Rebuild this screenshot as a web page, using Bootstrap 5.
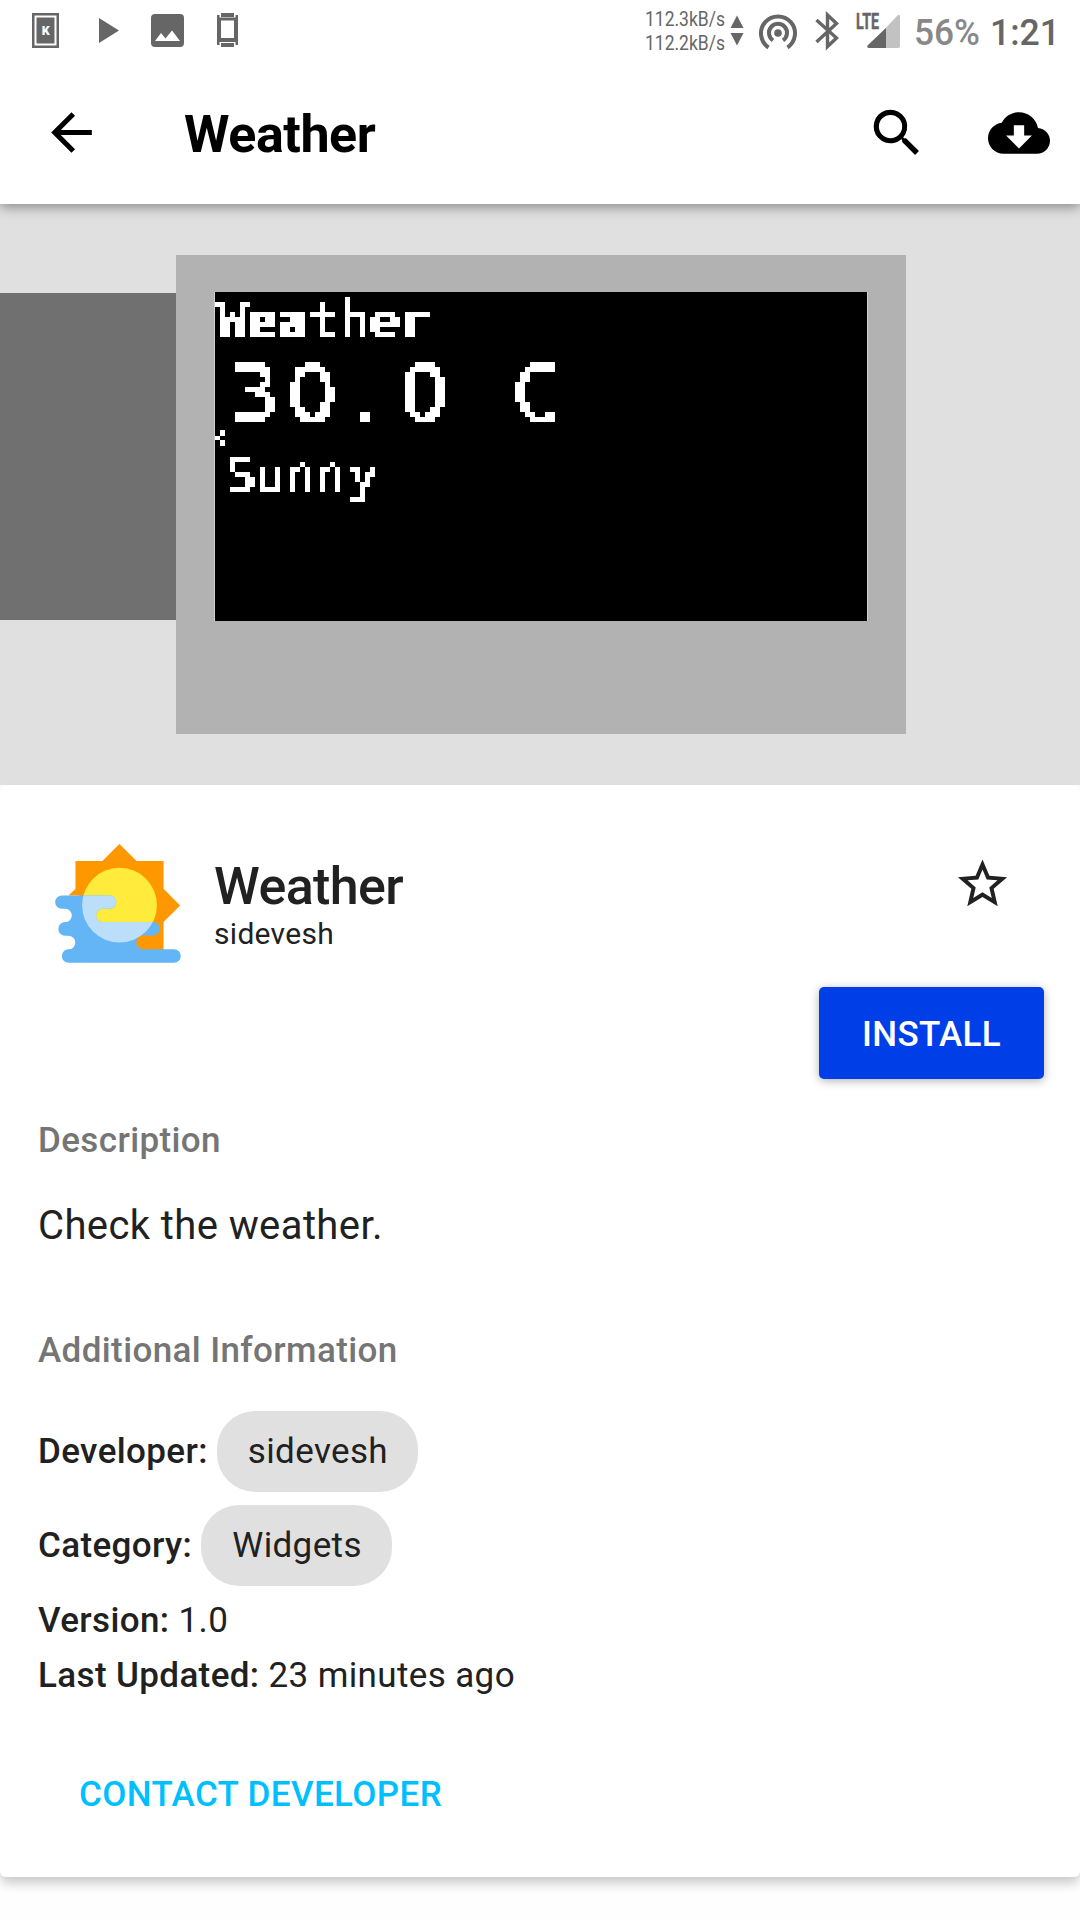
<!DOCTYPE html>
<html lang="en">
<head>
<meta charset="utf-8">
<meta name="viewport" content="width=device-width, initial-scale=1">
<title>Weather</title>
<link href="https://cdn.jsdelivr.net/npm/bootstrap@5.3.0/dist/css/bootstrap.min.css" rel="stylesheet">
<style>
body{font-family:Roboto,"Noto Sans",sans-serif;color:#212121;background:#fefefe;width:1080px;height:1920px;overflow:hidden}
svg{display:block;flex:none;overflow:visible}
.statusbar{height:61px;padding:8px 22px 0 32px;color:#666}
.statusbar svg{fill:#666}
.status-left{padding-top:5px}
.topbar{height:143px;padding:40px 30px 0 41px;color:#000}
.head-wrap{box-shadow:0 3px 12px rgba(0,0,0,.4);z-index:2}
.topbar h1{font-size:52px;font-weight:700;line-height:60px;margin:4px 0 0 82px;letter-spacing:-.45px}
.shots{height:581px;background:#e0e0e0;padding-top:51px}
.shot-prev{width:176px;height:327px;margin-top:38px;background:#707070}
.shot-frame{width:730px;height:479px;padding:37px 0 0 38px;background:#b2b2b2}
.lcd{border:solid #cfcfcf;border-width:0 1px;width:654px;overflow:hidden}
.details{height:1092px;border-radius:6px;padding:0 36px 0 38px;box-shadow:0 7px 12px -1px rgba(0,0,0,.22);background:#fff}
.apphead{height:202px}
.appicon{margin:59px 33px 0 17px}
.appname{font-size:52px;font-weight:500;line-height:60px;margin:72px 0 0;letter-spacing:-.6px}
.appdev{font-size:30px;line-height:36px;margin-top:-1px;letter-spacing:.3px}
.star{margin:69px 32px 0 0}
.btn-install{width:225px;height:92px;border-radius:5px;background:#003fe8;color:#fff;font-size:35px;font-weight:500;letter-spacing:.35px;padding:10px 0 6px;box-shadow:0 2px 10px rgba(0,0,0,.3)}
.caption-h{font-size:35px;font-weight:500;line-height:42px;color:#757575;margin:0;letter-spacing:.38px}
.desc{font-size:40px;line-height:48px;margin:40px 0 80px;letter-spacing:.4px}
.info{font-size:35px;line-height:55px;letter-spacing:.37px}
.info b{font-weight:500}
.tag{height:81px;padding:0 30px 0 31px;border-radius:38px;background:#e0e0e0}
.contact{font-size:35px;font-weight:500;line-height:42px;color:#00bfff;margin:70px 0 0 41px;letter-spacing:.38px}
</style>
<script src="https://cdn.jsdelivr.net/npm/bootstrap@5.3.0/dist/js/bootstrap.bundle.min.js"></script>
</head>
<body>
<header class="head-wrap bg-white position-relative">
  <div class="statusbar d-flex justify-content-between">
    <div class="status-left d-flex">
      <svg width="27" height="35" viewBox="0 0 27 35"><path fill-rule="evenodd" d="M0 0h27v35H0zM2.500 2.500v30h22v-30z"/><path d="M4.500 4.500h18v26h-18z"/><text x="13.700" y="21.500" font-size="12.500" font-weight="900" text-anchor="middle" fill="#fff">K</text></svg>
      <svg style="margin-left:40px" width="20" height="35"><path d="M0 5l20 12.500L0 30z"/></svg>
      <svg style="margin-left:32px" width="33" height="35"><path fill-rule="evenodd" d="M4 1h25a4 4 0 0 1 4 4v25a4 4 0 0 1-4 4H4a4 4 0 0 1-4-4V5a4 4 0 0 1 4-4zM4 28h25L21 17.500l-6.500 8L10 20z"/></svg>
      <svg style="margin-left:33px" width="21" height="35"><path fill-rule="evenodd" d="M4 0h13v4H4zM4 30h13v4H4zM0 2h2.500v2.500h16V2H21v30h-2.500v-3h-16v3H0zM4 7.500v17.500h13V7.500z"/></svg>
    </div>
    <div class="d-flex">
      <svg width="98" height="48" viewBox="0 -5 98 48" font-size="20.500"><text x="-1" y="13" textLength="80" lengthAdjust="spacingAndGlyphs">112.3kB/s</text><text x="-1" y="37" textLength="80" lengthAdjust="spacingAndGlyphs">112.2kB/s</text><path d="M84.500 15L91 2.500 97.500 15zM84.500 20L91 32.500 97.500 20z"/></svg>
      <svg style="margin-left:15px" width="38" height="41" viewBox="0 -5 38 41"><g fill="none" stroke="#666" stroke-width="4"><path d="M9.500 34.500A17 17 0 1 1 28.500 34.500"/><path d="M14 27.300A9 9 0 1 1 24 27.300"/></g><circle cx="19" cy="20" r="3.800"/></svg>
      <svg style="margin-left:18px" width="24" height="41" viewBox="0 -5 24 41"><path d="M1.500 7l20 18-9 8.500V2l9 8.500-20 18.500" fill="none" stroke="#666" stroke-width="3.400"/></svg>
      <svg style="margin-left:17px" width="45" height="41" viewBox="0 -5 45 41"><path fill="#c2c2c2" d="M11 35L41 3q3-3 3 1v29q0 2-2 2z"/><path d="M30 15v20H13q-3-1-1-3z"/><path fill="#fff" d="M0 0h24v17H0z"/><text x="0" y="15.700" font-size="21.500" font-weight="700" stroke="#666" stroke-width=".5" textLength="23" lengthAdjust="spacingAndGlyphs">LTE</text></svg>
      <svg style="margin-left:14px" width="143" height="48" viewBox="0 -5 143 48" font-size="37"><text x="-1" y="32" fill="#888" font-weight="500" textLength="66" lengthAdjust="spacingAndGlyphs">56%</text><text x="75" y="32" font-weight="500" textLength="70" lengthAdjust="spacingAndGlyphs">1:21</text></svg>
    </div>
  </div>
  <nav class="topbar d-flex align-items-start">
    <svg style="margin-top:1px" width="61" height="61" viewBox="0 0 24 24"><path d="M20 11H7.800l5.600-5.600L12 4l-8 8 8 8 1.400-1.400L7.800 13H20z"/></svg>
    <h1>Weather</h1>
    <svg class="ms-auto" style="margin-top:1px" width="62" height="62" viewBox="0 0 24 24"><path d="M15.500 14h-.8l-.3-.3A6.500 6.500 0 1 0 13.700 14.400l.3.300v.8l5 5 1.500-1.500zM9.500 14a4.500 4.500 0 1 1 0-9 4.500 4.500 0 0 1 0 9z"/></svg>
    <svg style="margin:1px 0 0 60px" width="62" height="62" viewBox="0 0 24 24"><path d="M19.350 10.040C18.670 6.590 15.640 4 12 4 9.110 4 6.600 5.640 5.350 8.040 2.340 8.360 0 10.910 0 14c0 3.310 2.690 6 6 6h13c2.760 0 5-2.240 5-5 0-2.640-2.050-4.780-4.650-4.960zM17 13l-5 5-5-5h3V9h4v4h3z"/></svg>
  </nav>
</header>
<section class="shots d-flex">
  <div class="shot-prev"></div>
  <div class="shot-frame">
    <svg class="lcd" width="654" height="329" viewBox="215 292 652 329" fill="#fff">
      <defs>
        <!-- samples the text once per 5px cell and grows each sample to a square LCD dot -->
        <filter id="dots" filterUnits="userSpaceOnUse" primitiveUnits="userSpaceOnUse" x="215" y="292" width="400" height="230" color-interpolation-filters="sRGB">
          <feComponentTransfer in="SourceGraphic" result="solid"><feFuncA type="discrete" tableValues="0 0 1 1 1"/></feComponentTransfer>
          <feFlood x="217" y="294" width="1" height="1" flood-color="#fff" result="dot"/>
          <feOffset in="dot" dx="0" dy="0" x="215" y="292" width="5" height="5" result="cell"/>
          <feTile in="cell" x="215" y="292" width="400" height="230" result="grid"/>
          <feComposite in="solid" in2="grid" operator="in"/>
          <feMorphology operator="dilate" radius="2"/>
        </filter>
      </defs>
      <path fill="#000" d="M214 292h654v329H214z"/>
      <g filter="url(#dots)" stroke="#fff">
      <text x="217.500 247.500 278 308.500 340 369.500 401" y="338" font-family="DejaVu Sans Mono" font-weight="700" font-size="50" stroke-width="1">Weather</text>
      <text x="229 287 353 399" y="420.500" font-family="DejaVu Sans" font-size="79" stroke-width="1.500">30.0</text>
      <text x="512" y="420.500" font-family="DejaVu Sans Mono" font-size="79" stroke-width="1.500">C</text>
      <text x="226 255.500 285.500 315.500 348" y="492" font-family="DejaVu Sans Mono" font-size="50" stroke-width=".7">Sunny</text>
      </g>
      <path d="M215 436h5v4h-5zM220 430h5v6h-5zM220 440h5v6h-5z"/>
    </svg>
  </div>
</section>
<main class="details">
  <div class="apphead d-flex align-items-start">
    <svg class="appicon" width="126" height="119" viewBox="165 222 378 358">
      <defs><clipPath id="disc"><circle cx="358.500" cy="406" r="112.500"/></clipPath>
      <path id="cloud" d="M185 377H329a20 20 0 0 1 0 40H308a20 20 0 0 0 0 40H460a20 20 0 0 1 0 40H430a21 21 0 0 0 0 42H523a20 20 0 0 1 0 40H205a20 20 0 0 1 0-40a20.500 20.500 0 0 0 0-41H195a20.500 20.500 0 0 1 0-41a20 20 0 0 0 0-40H185a20 20 0 0 1 0-40z"/></defs>
      <path fill="#ff9800" d="M358 222l52 51h81v84l50 50-50 50v103H235V377h-30l21-20v-84h81z"/>
      <circle cx="358.500" cy="406" r="112.500" fill="#ffeb3b"/>
      <use href="#cloud" fill="#64b5f6"/><use href="#cloud" fill="#bbdefb" clip-path="url(#disc)"/>
    </svg>
    <div><h2 class="appname">Weather</h2><div class="appdev">sidevesh</div></div>
    <svg class="star ms-auto" width="59" height="60" viewBox="0 0 24 24" fill="#212121"><path d="M22 9.240l-7.190-.62L12 2 9.190 8.630 2 9.240l5.460 4.730L5.820 21 12 17.270 18.180 21l-1.630-7.030L22 9.240zM12 15.400l-3.760 2.270 1-4.280-3.320-2.880 4.380-.38L12 6.100l1.710 4.040 4.380.38-3.320 2.880 1 4.280L12 15.400z"/></svg>
  </div>
  <div class="d-flex justify-content-end"><button class="btn btn-install border-0">INSTALL</button></div>
  <h3 class="caption-h" style="margin-top:41px">Description</h3>
  <p class="desc">Check the weather.</p>
  <h3 class="caption-h">Additional Information</h3>
  <div class="info">
    <div class="d-flex align-items-center" style="margin-top:39px"><b style="margin-right:9px">Developer:</b><span class="tag d-flex align-items-center">sidevesh</span></div>
    <div class="d-flex align-items-center" style="margin:13px 0 6.500px"><b style="margin-right:9px">Category:</b><span class="tag d-flex align-items-center">Widgets</span></div>
    <div><b>Version:</b> 1.0</div>
    <div><b>Last Updated:</b> 23 minutes ago</div>
  </div>
  <div class="contact" style="margin-top:71px">CONTACT DEVELOPER</div>
</main>
</body>
</html>
